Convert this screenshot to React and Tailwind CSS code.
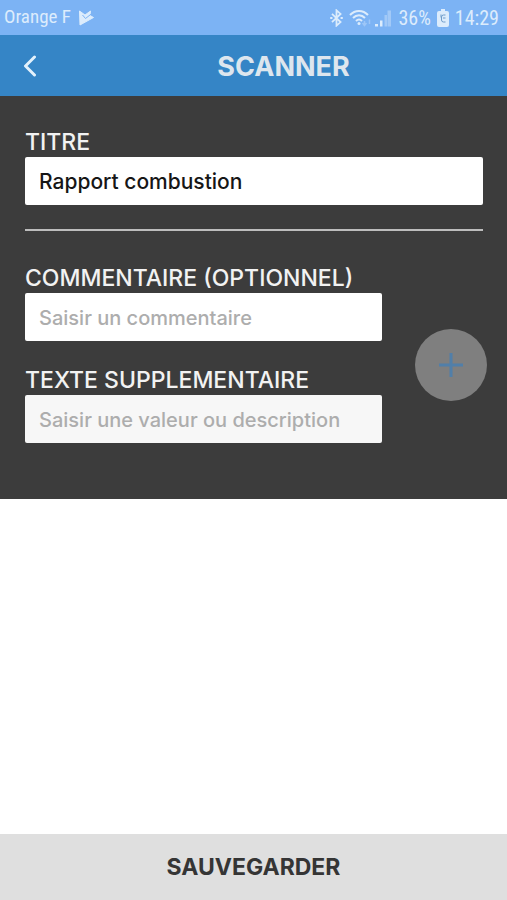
import React, { useState } from 'react';

// --- Status bar icons ---
const PlayCheckIcon = () => (
  <svg width="15" height="16" viewBox="0 0 15 16" fill="none" aria-hidden="true">
    <path d="M.5 1 6 5l5.500-4-.5 4.500 3.500 2L1 15Z" fill="currentColor" stroke="currentColor" strokeLinejoin="round" />
    <path d="M3.500 5 6.500 8.500 13.500 3" stroke="#7cb3f4" />
  </svg>
);

const BluetoothIcon = () => (
  <svg width="13" height="18" viewBox="0 0 14 20" fill="none" stroke="currentColor" strokeWidth="2" aria-hidden="true">
    <path d="m2 5.500 9.500 9L7 18.500v-17l4.500 4-9.500 9" />
    <path d="M0 10h2.500M11.500 10H14" />
  </svg>
);

const WifiIcon = () => (
  <svg width="23" height="18" viewBox="0 0 23 18" fill="none" stroke="currentColor" strokeWidth="2" aria-hidden="true">
    <path d="M1 6c5-5.500 13-5.500 18 0M4 9c3.500-3.800 8.500-3.800 12 0M7 12c2-2 4-2 6 0" />
    <circle cx="10" cy="14.500" r="1.500" fill="currentColor" stroke="none" />
    <path d="M15.500 12v4M13.500 14l2 2.500 2-2.500M20.500 15v-4.500" strokeOpacity=".35" strokeWidth="1.500" />
  </svg>
);

const SignalIcon = () => (
  <svg width="18" height="18" viewBox="0 0 18 18" fill="currentColor" aria-hidden="true">
    <path d="M1 15h3v2.500H1zM6 11.500h2.500v6H6z" />
    <path d="M10.500 6H13v11.500h-2.500zM13.500 1.500H17v16h-3.500z" fillOpacity=".4" />
  </svg>
);

const BatteryIcon = () => (
  <svg width="12" height="18" viewBox="0 0 12 18" aria-hidden="true">
    <path d="M4 0h4v2h2a2 2 0 0 1 2 2v12a2 2 0 0 1-2 2H2a2 2 0 0 1-2-2V4a2 2 0 0 1 2-2h2Z" fill="currentColor" />
    <path d="M8.500 6H6.500a2 2 0 0 0-2 2v3a2 2 0 0 0 2 2h2M4 5.500v3M6 9h2.500" fill="none" stroke="#6f9cc9" />
  </svg>
);

// --- Form field ---
const Field = ({ id, label, className = 'bg-white', ...props }) => (
  <div className="flex flex-col">
    <label htmlFor={id} className="text-[23px] leading-[30px] font-medium text-[#f2f2f2] uppercase whitespace-nowrap">
      {label}
    </label>
    <input
      id={id}
      type="text"
      className={`h-12 w-full rounded-xs px-3.5 text-[21px] font-medium text-[#161616] placeholder:text-xl placeholder:text-[#adadad] focus:outline-none ${className}`}
      {...props}
    />
  </div>
);

export default function App() {
  const [title, setTitle] = useState('Rapport combustion');
  const [comment, setComment] = useState('');
  const [extra, setExtra] = useState('');

  return (
    <div className="min-h-screen flex flex-col bg-white font-['Inter',sans-serif]">
      {/* Status bar */}
      <div className="h-[35px] px-1 flex items-center justify-between bg-[#7cb3f4] text-[#dcecfc] text-xl font-['Roboto_Condensed','Liberation_Sans_Narrow','Roboto',sans-serif]">
        <div className="flex items-center gap-2">
          <span className="text-[19px]">Orange F</span>
          <PlayCheckIcon />
        </div>
        <div className="flex items-center gap-1.5 pr-1">
          <BluetoothIcon />
          <div className="flex items-center gap-0.5">
            <WifiIcon />
            <SignalIcon />
          </div>
          <span>36%</span>
          <BatteryIcon />
          <span>14:29</span>
        </div>
      </div>

      {/* Header */}
      <header className="h-[61px] px-4 grid grid-cols-[28px_1fr_28px] items-center bg-[#3585c6]">
        <button type="button" aria-label="Retour" className="h-10 flex items-center justify-center text-[#e3f1fc]">
          <svg width="14" height="22" viewBox="0 0 14 22" fill="none" stroke="currentColor" strokeWidth="3" strokeLinecap="round" strokeLinejoin="round" aria-hidden="true">
            <path d="M11.500 2 2.500 11l9 9" />
          </svg>
        </button>
        <h1 className="pl-[60px] pt-1 text-center text-[27px] font-bold text-[#dde6ee]">SCANNER</h1>
      </header>

      {/* Form */}
      <main className="bg-[#3c3c3c] pl-[25px] pr-6 pt-[31px] pb-14">
        <Field id="title" label="Titre" value={title} onChange={(e) => setTitle(e.target.value)} />

        <hr className="mt-6 mb-8 border-t-2 border-[#bdbdbd]" />

        <div className="flex items-center justify-between">
          <div className="w-[78%] flex flex-col gap-6">
            <Field
              id="comment"
              label="Commentaire (optionnel)"
              placeholder="Saisir un commentaire"
              value={comment}
              onChange={(e) => setComment(e.target.value)}
            />
            <Field
              id="extra"
              label="Texte supplementaire"
              placeholder="Saisir une valeur ou description"
              className="bg-[#f7f7f7]"
              value={extra}
              onChange={(e) => setExtra(e.target.value)}
            />
          </div>
          <div className="pt-6 -mr-1">
            <button type="button" aria-label="Ajouter" className="size-[72px] rounded-full bg-[#7f7f7f] text-[#517fa9] flex items-center justify-center">
              <svg width="26" height="26" viewBox="0 0 26 26" fill="none" stroke="currentColor" strokeWidth="3" aria-hidden="true">
                <path d="M13 1v24M1 13h24" />
              </svg>
            </button>
          </div>
        </div>
      </main>

      <button type="button" className="mt-auto h-[66px] w-full bg-[#dfdfdf] text-[23px] font-bold text-[#353535]">
        SAUVEGARDER
      </button>
    </div>
  );
}
